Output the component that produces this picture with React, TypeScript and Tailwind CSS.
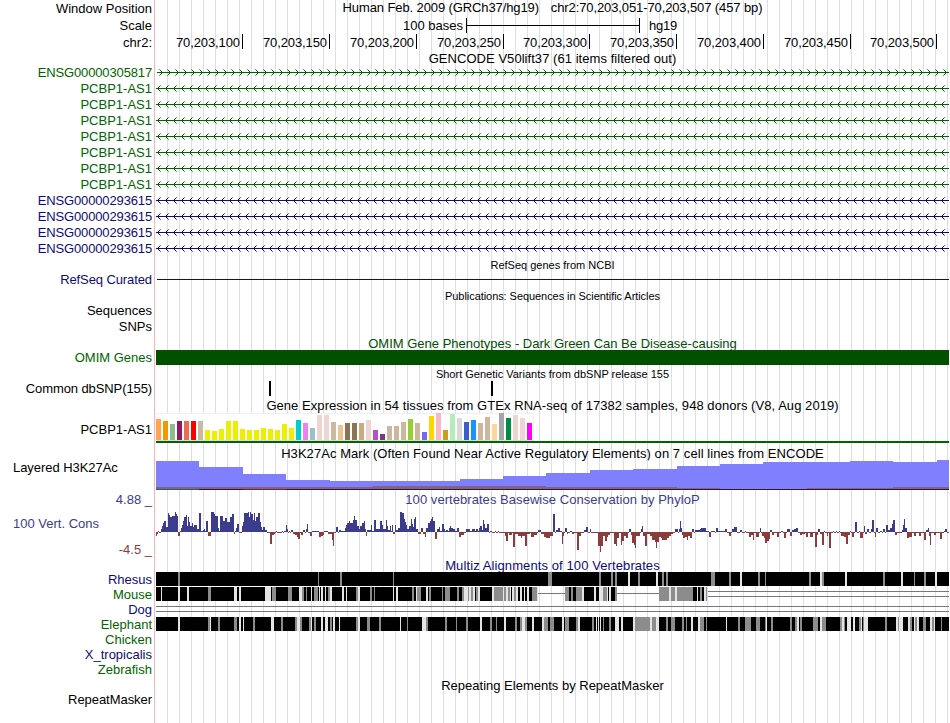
import type { ReactNode } from 'react';
import clsx from 'clsx';

// Horizontal units inside the dense tracks are thirds of a pixel.
const DENSE_WIDTH = 2379;
const DENSE_START = 18;

const NAVY = 'text-[#0c0c78]';
const GREEN = 'text-[#006400]';

interface RowProps {
    label?: ReactNode;
    height: string;
    labelClass?: string;
    children?: ReactNode;
}

function Row({ label, height, labelClass, children }: RowProps) {
    return (
        <div className={clsx('flex', height)}>
            <div
                className={clsx(
                    'flex w-[155px] shrink-0 items-center justify-end border-r border-[#ffb4b4] pr-[2px]',
                    labelClass,
                )}
            >
                {label}
            </div>
            <div className="ml-px w-[793px] shrink-0 bg-[repeating-linear-gradient(90deg,transparent_0px,transparent_11px,#dcdcf8_11px,#dcdcf8_12px)]">
                {children}
            </div>
        </div>
    );
}

interface TitleProps {
    children: ReactNode;
    className?: string;
}

function Title({ children, className }: TitleProps) {
    return <div className={clsx('flex h-full items-center justify-center', className)}>{children}</div>;
}

function range(count: number) {
    return Array.from({ length: count }, (_, i) => i);
}

// One pixel per step away from the tip, dir is 1 when the arms open to the right
function chevron(tip: number, dir: number, steps: number[]) {
    return steps.map((s) => `M${tip + dir * s} ${8 - s}h1v1h-1zM${tip + dir * s} ${8 + s}h1v1h-1z`).join('');
}

const forwardTips = range(99).map((i) => i * 8 + 6);
const reverseTips = range(99).map((i) => i * 8 + 1);

function GeneLine({ forward, color }: { forward?: boolean; color: string }) {
    const tips = forward ? forwardTips : reverseTips;
    const dir = forward ? -1 : 1;
    return (
        <svg width="793" height="16" shapeRendering="crispEdges" className="block">
            <rect x={forward ? 1 : 0} y="8" width="793" height="1" fill={color} />
            <path d={tips.map((tip) => chevron(tip, dir, [1, 2])).join('')} fill={color} />
            <path d={tips.map((tip) => chevron(tip, dir, [3])).join('')} fill={color} opacity="0.6" />
        </svg>
    );
}

const genes = [
    { name: 'ENSG00000305817', forward: true, coding: false },
    ...range(7).map(() => ({ name: 'PCBP1-AS1', forward: false, coding: false })),
    ...range(4).map(() => ({ name: 'ENSG00000293615', forward: false, coding: true })),
];

const rulerCells = [
    ['70,203,100', 'w-[87px]'],
    ['70,203,150', 'w-[87px]'],
    ['70,203,200', 'w-[87px]'],
    ['70,203,250', 'w-[87px]'],
    ['70,203,300', 'w-[86px]'],
    ['70,203,350', 'w-[87px]'],
    ['70,203,400', 'w-[87px]'],
    ['70,203,450', 'w-[87px]'],
    ['70,203,500', 'w-[86px]'],
];

// GTEx tissues: [bar height, color]
const tissues: [number, string][] = [
    [21, '#ffa54f'], [19, '#ee9a00'], [16, '#8fbc8f'], [19, '#8b1c62'], [19, '#ee6a50'], [19, '#ff0000'],
    [19, '#cdb79e'], [10, '#eeee00'], [9, '#eeee00'], [11, '#eeee00'], [19, '#eeee00'], [19, '#eeee00'],
    [11, '#eeee00'], [10, '#eeee00'], [10, '#eeee00'], [12, '#eeee00'], [11, '#eeee00'], [10, '#eeee00'],
    [16, '#eeee00'], [12, '#eeee00'], [20, '#00cdcd'], [17, '#ee82ee'], [12, '#9ac0cd'], [25, '#eed5d2'],
    [25, '#eed5d2'], [18, '#cdb79e'], [15, '#eec591'], [17, '#8b7355'], [17, '#8b7355'], [17, '#cdaa7d'],
    [20, '#eed5d2'], [10, '#b452cd'], [6, '#7a378b'], [14, '#cdb79e'], [14, '#cdb79e'], [18, '#cdb79e'],
    [21, '#9acd32'], [17, '#cdb79e'], [8, '#7a67ee'], [24, '#ffd700'], [27, '#ffb6c1'], [10, '#cd9b1d'],
    [26, '#b4eeb4'], [22, '#d9d9d9'], [18, '#3a5fcd'], [20, '#1e90ff'], [17, '#cdb79e'], [23, '#cdb79e'],
    [16, '#ffd39b'], [27, '#a6a6a6'], [22, '#008b45'], [25, '#eed5d2'], [22, '#eed5d2'], [17, '#ff00ff'],
];

// H3K27Ac signal steps: [start, end, height]
const acetylation = [
    [18, 147, 28], [147, 279, 22], [279, 408, 15], [408, 540, 9], [540, 930, 8], [930, 1059, 10],
    [1059, 1188, 13], [1188, 1320, 16], [1320, 1449, 19], [1449, 1581, 20], [1581, 1710, 23],
    [1710, 1839, 25], [1839, 2100, 27], [2100, 2229, 28], [2229, 2361, 27], [2361, 2397, 29],
];
const acetylationLow = [
    [18, 669, 2], [669, 1188, 3], [1188, 1581, 2], [1581, 1710, 1], [1971, 2229, 1], [2229, 2397, 2],
];

// PhyloP scores: "start-end:score"
const phyloLeft =
    '18-21:-4 21-24:-2 24-27:1 27-33:-1 34-37:3 37-40:6 40-43:9 43-47:11 47-53:5 53-57:19 57-60:17 60-66:15 66-75:16 75-78:20 78-81:18 81-84:16 84-90:-4 ' +
    '90-93:1 93-96:4 96-99:7 99-102:11 102-108:15 108-111:17 111-114:6 114-117:15 117-120:10 120-126:6 126-129:9 129-132:5 132-141:7 141-147:3 147-153:19 ' +
    '153-159:1 159-162:2 162-165:3 165-168:1 168-174:11 174-183:-4 183-192:20 192-195:18 195-204:16 204-207:4 207-210:1 210-219:16 219-225:11 225-231:14 231-240:10 240-246:15 ' +
    '246-252:18 252-255:-2 255-258:1 258-261:4 261-267:8 267-276:-1 276-279:6 279-282:10 282-294:19 294-297:20 297-300:15 300-303:20 303-309:18 309-312:12 312-315:19 ' +
    '315-318:11 318-324:15 324-330:19 330-333:10 333-336:5 336-339:2 339-345:5 345-351:2 351-360:-1 360-366:-12 366-372:-3 372-375:-2 378-381:1 381-396:-1 ' +
    '396-399:1 402-408:1 408-411:7 411-414:3 417-420:1 423-429:2 429-435:-2 435-441:-3 441-444:-5 444-450:-7 453-459:-3 459-465:2 468-471:3 471-474:8 474-480:-1 ' +
    '480-486:-4 486-507:1 507-513:-5 513-519:-4 519-522:-3 522-534:1 534-546:-2 546-549:-8 549-552:-14 558-564:5 567-573:2 573-585:1 585-588:4 588-591:7 591-597:9 ' +
    '597-600:11 600-609:9 609-612:12 612-615:16 615-621:12 621-627:6 627-630:3 630-636:6 636-642:9 642-645:11 645-648:3 648-651:-4 651-663:2 663-666:7 ' +
    '666-672:1 672-678:12 678-690:3 690-696:11 696-699:7 699-708:3 708-711:12 711-714:6 714-720:2 720-723:6 723-726:1 726-729:7 729-735:-2 735-738:7 738-744:2 ' +
    '744-750:4 750-756:20 756-762:19 762-765:13 765-768:10 768-771:7 771-777:3 777-783:6 783-786:13 786-789:8 789-792:5 792-795:13 795-798:15 798-804:3 ' +
    '804-813:-2 813-819:4 819-825:-2 825-828:-5 828-834:4 834-840:9 840-843:11 843-846:13 846-849:15 849-855:11 855-861:-7 861-867:3 867-870:5 870-876:1 876-882:8 ' +
    '882-885:3 885-888:1 888-894:2 894-897:1 897-900:4 900-903:6 903-909:4 909-915:3 915-921:1 921-927:4 927-933:-5 933-942:-3 948-960:3 960-966:1 966-975:3 975-978:1 978-984:3 984-987:1 987-990:4 ' +
    '990-996:6 996-999:2 999-1002:12 1002-1005:8 1005-1011:4 1011-1017:8 1020-1026:1 1035-1038:1 1038-1044:-1 1044-1047:1 1047-1065:-1 1065-1068:-4 1068-1074:-9 1077-1086:-3 1089-1095:-15 ' +
    '1095-1104:-2 1104-1113:-4 1113-1116:-6 1116-1125:-4 1125-1131:-14 1131-1140:-2 1143-1152:-5 1152-1161:-3 1164-1173:2 1173-1182:-2 1182-1188:-5 1188-1200:-6';
const phyloRight =
    '0-9:-4 9-15:18 18-24:2 24-30:4 30-36:1 36-39:-12 39-42:-4 45-51:4 51-54:-2 60-66:1 66-72:-2 81-87:-18 87-93:-4 102-108:2 108-114:5 120-123:3 144-150:-14 ' +
    '150-153:-20 153-159:-14 159-165:-4 165-171:-9 171-174:-5 174-180:-3 192-198:-12 198-201:-14 201-207:-6 213-216:-13 216-222:-9 222-228:-4 228-234:-6 237-243:3 243-246:-3 ' +
    '246-252:-11 252-255:-13 255-258:-16 258-270:-4 273-276:3 276-279:6 279-285:-4 285-291:-14 291-300:-2 300-306:-4 306-315:-8 315-318:-10 318-321:-16 ' +
    '321-327:-10 327-333:-5 333-336:-6 336-351:-8 351-357:-6 357-363:-4 363-369:-2 375-384:3 387-390:3 390-393:11 393-396:4 396-399:-3 399-405:-6 405-411:-5 ' +
    '411-414:-8 414-420:-4 420-426:-6 426-432:3 435-450:2 450-453:3 453-468:4 468-477:1 477-483:-5 483-495:1 498-504:4 504-525:1 525-531:3 537-543:-4 546-552:3 ' +
    '552-561:5 570-576:2 585-588:1 597-603:-5 603-609:-3 609-612:-8 618-627:-5 630-633:4 636-642:-4 642-645:-6 645-651:-11 651-657:-9 657-660:-7 ' +
    '660-666:2 666-672:-3 681-687:-5 693-699:1 702-708:-6 711-720:3 720-726:-4 726-732:2 732-738:3 738-744:4 750-756:-3 756-765:-2 768-774:-5 780-789:-5 ' +
    '795-801:-15 801-804:-3 804-810:3 810-816:-2 816-822:-13 822-825:1 831-834:-4 837-843:-16 849-852:1 858-861:1 867-870:1 873-882:-4 882-888:-5 888-894:-12 894-900:-3 900-903:1 ' +
    '906-912:-5 915-921:10 927-930:1 930-939:-6 942-945:6 945-951:-2 951-957:3 963-966:3 966-972:12 975-978:-5 978-984:4 990-996:1 999-1005:3 1008-1014:7 ' +
    '1014-1020:2 1020-1026:4 1026-1029:8 1029-1035:12 1035-1041:-3 1056-1059:2 1059-1062:7 1062-1065:13 1065-1071:4 1071-1077:-6 1077-1086:-5 1092-1098:-4 ' +
    '1107-1113:-4 1122-1128:-8 1128-1134:2 1134-1137:4 1137-1140:-4 1140-1143:-13 1152-1158:-3 1170-1176:-7 1182-1185:1 1185-1191:3 1191-1197:-1';

function ScoreBars({ data, offset }: { data: string; offset: number }) {
    const scores = data.split(' ').map((item) => {
        const [span, value] = item.split(':');
        const [start, end] = span.split('-').map(Number);
        return { start, end, score: Number(value) };
    });
    return (
        <g transform={`translate(${offset} 0)`}>
            {scores.map(({ start, end, score }, i) => {
                const previousEnd = i > 0 ? scores[i - 1].end : start;
                return (
                    <g key={start}>
                        {/* spans without a score sit just under zero */}
                        <rect x={previousEnd} y="25" width={start - previousEnd} height="1" fill="#8c3c3c" />
                        <rect
                            x={start}
                            y={score > 0 ? 25 - score : 25}
                            width={end - start}
                            height={Math.abs(score)}
                            fill={score > 0 ? '#3c3c8c' : '#8c3c3c'}
                        />
                    </g>
                );
            })}
        </g>
    );
}

// Identity gaps per species in three consecutive windows, "start-end" followed by g (mid) or w (light)
const alignments: Record<string, string[]> = {
    rhesus: [
        '84-90g 504-507g 570-576g 729-732g',
        '384-396g 537-543g 573-579g 585-591g 624-630w 654-660g 708-714w 726-732g 738-744g',
        '63-75g 117-123g 150-156w 204-210g 225-228g 357-363g 390-396w 396-402g 465-471w 579-585g 633-639w 672-675g 702-708g 735-741w',
    ],
    mouse: [
        '33-36w 84-90w 111-117w 174-183g 252-261w 267-273w 345-363w 366-378g 414-426g 447-456w 456-462g 468-471g 483-486w 492-504g 507-510w 513-519w 525-528w 534-540g 540-546w 576-582w 588-591w 618-624g 624-630w 660-666g 672-675g 729-732w 738-744w 786-792g 798-801w 801-810g',
        '0-3g 18-24w 27-33g 66-69g 75-90g 111-117g 126-132g 132-144w 144-147g 147-153w 153-159g 159-165w 168-174g 174-180w 216-222w 222-249g 249-252w 252-258g 258-264w 264-270g 270-273w 276-282w 282-288g 288-294w 300-306w 312-315w 321-327w 336-351g 351-354w 435-447g 453-459g 468-486g 486-492w 522-528w 537-549w 549-561g 561-564w 567-573w 585-591g 717-747g 747-753w 753-765g 765-771w 771-810g',
        '0-9g 21-24w 30-36g 42-48w 48-51g',
    ],
    elephant: [
        '84-90w 174-180g 180-183w 204-210g 252-261g 267-273w 279-282w 309-315g 363-372w 393-399g 435-441g 441-450w 450-456g 477-483g 483-486w 492-498g 513-519w 525-534w 540-546g 549-555w 567-570w 618-624g 624-630w 651-660g 687-693g 750-753w 771-774g',
        '6-18w 18-24g 75-81g 108-111g 138-144g 180-186w 210-216g 228-231g 252-258w 285-291g 300-306g 306-315w 315-321g 336-342w 366-372w 372-384g 390-402g 426-432w 435-447g 468-474g 474-480w 516-522g 528-531w 534-537w 540-543w 549-552g 567-573g 585-597w 603-609w 639-645w 645-690g 690-696w 696-708g 708-717w 738-744g 753-765g 786-792g 798-801g',
        '3-9w 24-30w 30-42g 48-51g 108-111w 144-150g 165-183g 198-210g 225-228g 228-231w 243-249g 300-306g 315-321g 321-327w 330-336g 369-384g 390-396w 396-408g 450-456g 456-462w 462-465g 471-483w 489-495w 507-513g 513-516w 519-522g 522-534w 585-591g 618-624w 624-627g 627-639w 654-660w 660-666g 672-675w 675-681g 681-687w 699-708g 720-726w 726-732g 732-735w 753-756g',
    ],
};

function Alignment({ species, blocks }: { species: string; blocks: number[][] }) {
    return (
        <svg
            width="793"
            height="15"
            viewBox={`${DENSE_START} 0 ${DENSE_WIDTH} 15`}
            preserveAspectRatio="none"
            shapeRendering="crispEdges"
            className="block"
        >
            {blocks.map(([start, end]) => (
                <rect key={start} x={start} y="0" width={end - start} height="14" fill="#000" />
            ))}
            {alignments[species].map((stripes, i) => (
                <g key={i} transform={`translate(${i * 810} 0)`}>
                    {stripes.split(' ').map((stripe) => {
                        const [start, end] = stripe.slice(0, -1).split('-').map(Number);
                        return (
                            <rect
                                key={stripe}
                                x={start}
                                y="0"
                                width={end - start}
                                height="14"
                                fill={stripe.endsWith('g') ? '#8c8c8c' : '#e4e4e4'}
                            />
                        );
                    })}
                </g>
            ))}
            {species === 'mouse' && (
                <g fill="#787878">
                    <rect x="1164" y="6" width="81" height="1" />
                    <rect x="1401" y="6" width="126" height="1" />
                    <rect x="1674" y="4" width="723" height="1" />
                    <rect x="1674" y="9" width="723" height="1" />
                </g>
            )}
        </svg>
    );
}

export default function App() {
    return (
        <div className="h-[723px] w-[950px] overflow-hidden bg-white font-['Liberation_Sans',Arial,sans-serif] text-[13px] leading-none whitespace-nowrap text-black">
            <Row label="Window Position" height="h-[17px]">
                <Title className="pb-[2px] tracking-[-0.11px]">
                    <span>Human Feb. 2009 (GRCh37/hg19)</span>
                    <span className="ml-[12px]">chr2:70,203,051-70,203,507 (457 bp)</span>
                </Title>
            </Row>
            <Row label="Scale" height="h-[17px]">
                <div className="flex h-full items-center">
                    <span className="w-[307px] text-right">100 bases</span>
                    <div className="ml-[3px] flex h-[15px] w-[174px] items-center border-x border-black">
                        <div className="h-px w-full bg-black" />
                    </div>
                    <span className="ml-[9px] tracking-[-0.2px]">hg19</span>
                </div>
            </Row>
            <Row label="chr2:" height="h-[17px]">
                <div className="flex">
                    {rulerCells.map(([position, width]) => (
                        <div
                            key={position}
                            className={clsx(
                                'flex h-[15px] items-center justify-end border-r border-black pt-[2px] pr-[2px] tracking-[-0.1px]',
                                width,
                            )}
                        >
                            {position}
                        </div>
                    ))}
                </div>
            </Row>
            <Row height="h-[13px]">
                <Title className="pt-[2px] tracking-[0.05px]">GENCODE V50lift37 (61 items filtered out)</Title>
            </Row>

            {genes.map((gene, i) => (
                <Row
                    key={i}
                    label={gene.name}
                    height="h-[16px]"
                    labelClass={clsx(
                        gene.coding ? NAVY : GREEN,
                        gene.name.startsWith('ENSG') && 'tracking-[-0.14px]',
                    )}
                >
                    <GeneLine forward={gene.forward} color={gene.coding ? '#0c0c78' : '#006400'} />
                </Row>
            ))}

            <Row height="h-[15px]">
                <Title className="pt-[3px] text-[11px]">RefSeq genes from NCBI</Title>
            </Row>
            <Row label="RefSeq Curated" height="h-[17px]" labelClass={clsx('tracking-[-0.1px]', NAVY)}>
                <div className="flex h-full items-center">
                    <div className="ml-px h-px w-[792px] bg-[#0c0c78]" />
                </div>
            </Row>
            <Row height="h-[15px]">
                <Title className="pt-[2px] text-[11px] tracking-[-0.06px]">
                    Publications: Sequences in Scientific Articles
                </Title>
            </Row>
            <Row label="Sequences" height="h-[16px]" labelClass="pb-[2px]" />
            <Row label="SNPs" height="h-[15px]" />

            <Row height="h-[16px]">
                <Title className="pt-[2px] text-[#005000]">
                    OMIM Gene Phenotypes - Dark Green Can Be Disease-causing
                </Title>
            </Row>
            <Row label="OMIM Genes" height="h-[15px]" labelClass={GREEN}>
                <div className="h-[15px] bg-[#005000]" />
            </Row>

            <Row height="h-[16px]">
                <Title className="pt-[2px] text-[11px]">Short Genetic Variants from dbSNP release 155</Title>
            </Row>
            <Row label="Common dbSNP(155)" height="h-[15px]" labelClass="tracking-[-0.1px]">
                <div className="flex">
                    <div className="ml-[113px] h-[15px] w-[2px] bg-black" />
                    <div className="ml-[220px] h-[15px] w-[2px] bg-black" />
                </div>
            </Row>

            <Row height="h-[17px]">
                <Title className="pt-[2px] tracking-[0.055px]">
                    Gene Expression in 54 tissues from GTEx RNA-seq of 17382 samples, 948 donors (V8, Aug 2019)
                </Title>
            </Row>
            <Row label="PCBP1-AS1" height="h-[31px]" labelClass="pt-[2px]">
                <svg width="793" height="31" shapeRendering="crispEdges" className="block">
                    <rect x="0" y="0" width="378" height="28" fill="#f0f0f4" />
                    <rect x="1" y="1" width="376" height="26" fill="#fff" />
                    <rect x="0" y="27" width="378" height="1" fill="#dcdcdc" />
                    {tissues.map(([height, color], i) => (
                        <rect key={i} x={i * 7} y={27 - height} width="5" height={height} fill={color} />
                    ))}
                    <rect x="0" y="28" width="793" height="2" fill="#006400" />
                </svg>
            </Row>

            <Row height="h-[16px]">
                <Title className="pt-[2px] tracking-[0.06px]">
                    H3K27Ac Mark (Often Found Near Active Regulatory Elements) on 7 cell lines from ENCODE
                </Title>
            </Row>
            <Row
                label="Layered H3K27Ac"
                height="h-[31px]"
                labelClass="justify-start! pb-[16px] pl-[13px] tracking-[-0.05px]"
            >
                <svg
                    width="793"
                    height="31"
                    viewBox={`${DENSE_START} 0 ${DENSE_WIDTH} 31`}
                    preserveAspectRatio="none"
                    shapeRendering="crispEdges"
                    className="block"
                >
                    {acetylation.map(([start, end, height]) => (
                        <rect key={start} x={start} y={29 - height} width={end - start} height={height} fill="#8080ff" />
                    ))}
                    {acetylationLow.map(([start, end, height]) => (
                        <rect key={start} x={start} y={29 - height} width={end - start} height={height} fill="#826482" />
                    ))}
                    <rect x="18" y="29" width="2379" height="1" fill="#2c1838" />
                    <rect x="18" y="29" width="129" height="1" fill="#325a64" />
                    <rect x="279" y="29" width="129" height="1" fill="#6e283c" />
                </svg>
            </Row>

            <Row label="4.88 _" height="h-[16px]" labelClass="text-[#3c3c8c]">
                <Title className="tracking-[0.05px] text-[#3c3c8c]">
                    100 vertebrates Basewise Conservation by PhyloP
                </Title>
            </Row>
            <Row
                height="h-[51px]"
                labelClass="justify-between! pl-[13px]"
                label={
                    <>
                        <span className="mb-[18px] text-[#3c3c8c]">100 Vert. Cons</span>
                        <span className="mt-[34px] text-[#8c3c3c]">-4.5 _</span>
                    </>
                }
            >
                <svg
                    width="793"
                    height="51"
                    viewBox={`${DENSE_START} 0 ${DENSE_WIDTH} 51`}
                    preserveAspectRatio="none"
                    shapeRendering="crispEdges"
                    className="block"
                >
                    <ScoreBars data={phyloLeft} offset={0} />
                    <ScoreBars data={phyloRight} offset={1200} />
                </svg>
            </Row>

            <Row height="h-[14px]">
                <Title className={clsx('tracking-[0.1px]', NAVY)}>Multiz Alignments of 100 Vertebrates</Title>
            </Row>
            <Row label="Rhesus" height="h-[15px]" labelClass={NAVY}>
                <Alignment species="rhesus" blocks={[[18, 2397]]} />
            </Row>
            <Row label="Mouse" height="h-[15px]" labelClass={GREEN}>
                <Alignment
                    species="mouse"
                    blocks={[
                        [18, 1164],
                        [1245, 1401],
                        [1527, 1671],
                    ]}
                />
            </Row>
            <Row label="Dog" height="h-[15px]" labelClass={NAVY}>
                <div className="flex flex-col gap-1 pt-1">
                    <div className="h-px bg-[#787878]" />
                    <div className="h-px bg-[#787878]" />
                </div>
            </Row>
            <Row label="Elephant" height="h-[15px]" labelClass={GREEN}>
                <Alignment species="elephant" blocks={[[18, 2397]]} />
            </Row>
            <Row label="Chicken" height="h-[15px]" labelClass={GREEN} />
            <Row label="X_tropicalis" height="h-[15px]" labelClass={NAVY} />
            <Row label="Zebrafish" height="h-[15px]" labelClass={GREEN} />

            <Row height="h-[16px]">
                <Title>Repeating Elements by RepeatMasker</Title>
            </Row>
            <Row label="RepeatMasker" height="h-[15px]" labelClass="pb-[2px] tracking-[-0.05px]" />
            <Row height="h-[16px]" />
        </div>
    );
}
